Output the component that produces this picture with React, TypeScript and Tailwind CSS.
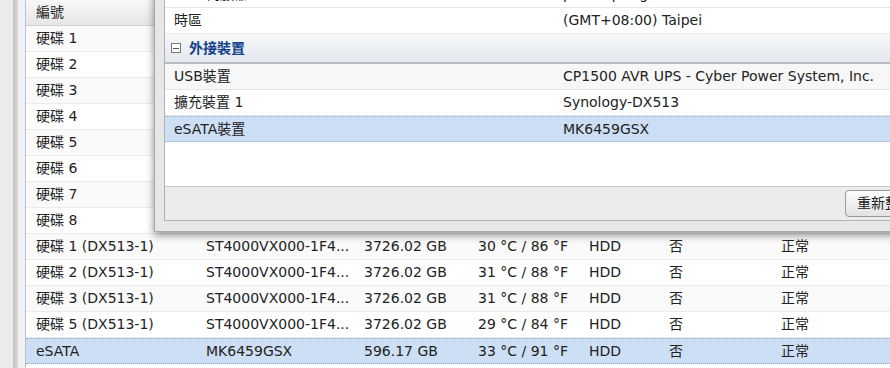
import React from 'react';

const font = { fontFamily: '"DejaVu Sans", "Noto Sans CJK TC", sans-serif' };

const cols = ['w-[170px]', 'w-[158px]', 'w-[114px]', 'w-[111px]', 'w-[80px]', 'w-[112px]', 'flex-1'];

const disks: string[][] = [
  ['硬碟 1'], ['硬碟 2'], ['硬碟 3'], ['硬碟 4'], ['硬碟 5'], ['硬碟 6'], ['硬碟 7'], ['硬碟 8'],
  ['硬碟 1 (DX513-1)', 'ST4000VX000-1F4...', '3726.02 GB', '30 °C / 86 °F', 'HDD', '否', '正常'],
  ['硬碟 2 (DX513-1)', 'ST4000VX000-1F4...', '3726.02 GB', '31 °C / 88 °F', 'HDD', '否', '正常'],
  ['硬碟 3 (DX513-1)', 'ST4000VX000-1F4...', '3726.02 GB', '31 °C / 88 °F', 'HDD', '否', '正常'],
  ['硬碟 5 (DX513-1)', 'ST4000VX000-1F4...', '3726.02 GB', '29 °C / 84 °F', 'HDD', '否', '正常'],
  ['eSATA', 'MK6459GSX', '596.17 GB', '33 °C / 91 °F', 'HDD', '否', '正常'],
];

const InfoRow = ({ label, value, selected, shade }: { label: string; value: string; selected?: boolean; shade?: boolean }) => (
  <div
    className={`flex h-[26px] shrink-0 items-center ${
      selected
        ? 'bg-[#cddff4] border-y border-dotted border-[#8fa9cf]'
        : `${shade ? 'bg-[#f7f7f7]' : 'bg-white'} border-b border-[#e6e6e6]`
    }`}
  >
    <div className="w-[398px] pl-[9px] whitespace-nowrap">{label}</div>
    <div className="flex-1 whitespace-nowrap">{value}</div>
  </div>
);

export default function App() {
  return (
    <div className="relative w-[890px] h-[368px] overflow-hidden bg-[#ebebeb] text-[14px] text-[#222]" style={font}>
      {/* window frame + grid */}
      <div className="flex h-full">
        <div className="w-[25px] shrink-0 flex">
          <div className="w-[13px] bg-[#ebebeb]" />
          <div className="w-[5px] bg-gradient-to-r from-[#c4c4c4] to-[#d8d8d8]" />
          <div className="w-[7px] bg-[#f1f1f1]" />
        </div>
        <div className="flex-1 flex flex-col bg-white border-l border-[#b9c4d2]">
          <div className="flex h-[26px] shrink-0 items-center bg-gradient-to-b from-[#f8f8f8] to-[#e6e6e6] border-b border-[#d0d0d0]">
            <div className="pl-[10px]">編號</div>
          </div>
          {disks.map((row, i) => {
            const sel = i === disks.length - 1;
            return (
              <div
                key={i}
                className={`flex h-[26px] shrink-0 items-center whitespace-nowrap ${
                  sel
                    ? 'bg-[#cddff4] border-y border-dotted border-[#8fa9cf]'
                    : `${i % 2 ? 'bg-white' : 'bg-[#fafafa]'} border-b border-[#ebebeb]`
                }`}
              >
                {cols.map((c, j) => (
                  <div key={j} className={`${c} pl-[10px] shrink-0 overflow-hidden`}>
                    {row[j] ?? ''}
                  </div>
                ))}
              </div>
            );
          })}
        </div>
      </div>

      {/* dialog */}
      <div className="absolute left-[154px] top-[-40px] w-[760px] h-[272px] bg-[#e7e7e7] border border-[#a8a8a8] pt-[20px] pl-[9px] pb-[10px] shadow-[0_3px_8px_rgba(0,0,0,0.45)]">
        <div className="h-full flex flex-col bg-white border border-[#b2b2b2]">
          <InfoRow label="NTP 伺服器" value="pool.ntp.org" />
          <InfoRow label="時區" value="(GMT+08:00) Taipei" />
          <div className="flex h-[30px] shrink-0 items-center gap-[8px] pl-[6px] bg-gradient-to-b from-[#f6f8fa] to-[#e3e8ee] border-b-2 border-[#b8bcc2] text-[#15428b] font-bold">
            <span className="w-[10px] h-[10px] border border-[#7a7a7a] bg-white flex items-center justify-center">
              <span className="w-[6px] h-[1px] bg-[#555]" />
            </span>
            <span>外接裝置</span>
          </div>
          <InfoRow label="USB裝置" value="CP1500 AVR UPS - Cyber Power System, Inc." shade />
          <InfoRow label="擴充裝置 1" value="Synology-DX513" />
          <InfoRow label="eSATA裝置" value="MK6459GSX" selected />
          <div className="flex-1 bg-white" />
          <div className="h-[34px] shrink-0 bg-[#ececec] border-t border-[#c8c8c8] flex items-center pl-[680px]">
            <button className="h-[27px] px-[11px] rounded-[4px] border border-[#9a9a9a] bg-gradient-to-b from-[#fdfdfd] to-[#e2e2e2] whitespace-nowrap text-[#222]">
              重新整理
            </button>
          </div>
        </div>
      </div>
    </div>
  );
}
